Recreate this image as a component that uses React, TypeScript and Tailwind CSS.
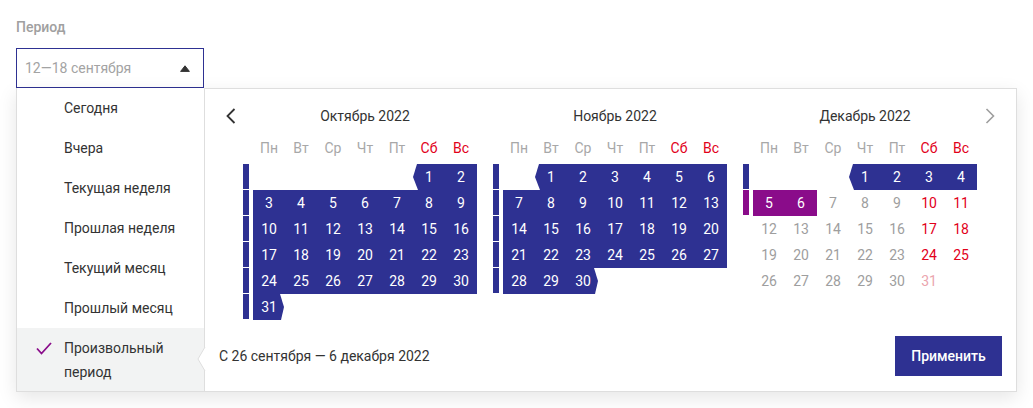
import React from 'react';

const BLUE = 'bg-[#2e3192]';

type Month = {
  title: string;
  offset: number;
  days: number;
  handles: ('blue' | 'purple' | null)[];
  kind: (d: number) => 'range' | 'start' | 'end' | 'purple' | 'plain';
};

const months: Month[] = [
  {
    title: 'Октябрь 2022',
    offset: 5,
    days: 31,
    handles: ['blue', 'blue', 'blue', 'blue', 'blue', 'blue'],
    kind: (d) => (d === 1 ? 'start' : d === 31 ? 'end' : 'range'),
  },
  {
    title: 'Ноябрь 2022',
    offset: 1,
    days: 30,
    handles: ['blue', 'blue', 'blue', 'blue', 'blue'],
    kind: (d) => (d === 1 ? 'start' : d === 30 ? 'end' : 'range'),
  },
  {
    title: 'Декабрь 2022',
    offset: 3,
    days: 31,
    handles: ['blue', 'purple', null, null, null],
    kind: (d) => (d === 1 ? 'start' : d <= 4 ? 'range' : d <= 6 ? 'purple' : 'plain'),
  },
];

const weekdays = ['Пн', 'Вт', 'Ср', 'Чт', 'Пт', 'Сб', 'Вс'];

const menu = ['Сегодня', 'Вчера', 'Текущая неделя', 'Прошлая неделя', 'Текущий месяц', 'Прошлый месяц'];

function DayCell({ d, col, kind, pink }: { d: number; col: number; kind: string; pink: boolean }) {
  const weekend = col >= 5;
  let cls = 'w-8 h-[26px] flex items-center justify-center text-[14px] ';
  if (kind === 'range') cls += BLUE + ' text-white';
  else if (kind === 'start')
    cls += BLUE + ' text-white [clip-path:polygon(4px_0,100%_0,100%_100%,5px_100%,0_50%)]';
  else if (kind === 'end')
    cls += BLUE + ' text-white [clip-path:polygon(0_0,27px_0,31px_50%,28px_100%,0_100%)]';
  else if (kind === 'purple') cls += 'bg-[#8a0c8a] text-white';
  else if (pink) cls += 'text-[#eba5ae]';
  else if (weekend) cls += 'text-[#e2001a]';
  else cls += 'text-[#9e9e9e]';
  return <div className={cls}>{d}</div>;
}

function MonthView({ m }: { m: Month }) {
  const cells: (number | null)[] = [];
  for (let i = 0; i < m.offset; i++) cells.push(null);
  for (let d = 1; d <= m.days; d++) cells.push(d);
  const rows: (number | null)[][] = [];
  for (let i = 0; i < cells.length; i += 7) rows.push(cells.slice(i, i + 7));

  return (
    <div className="flex flex-col">
      <div className="ml-[10px] w-[224px] h-6 flex items-center justify-center text-[14px] text-[#333333]">
        {m.title}
      </div>
      <div className="ml-[10px] mt-2 h-6 grid grid-cols-7 w-[224px]">
        {weekdays.map((w, i) => (
          <div
            key={w}
            className={`flex items-center justify-center text-[14px] ${i >= 5 ? 'text-[#e2001a]' : 'text-[#a8a8a8]'}`}
          >
            {w}
          </div>
        ))}
      </div>
      <div className="mt-1 flex flex-col">
        {rows.map((row, ri) => (
          <div key={ri} className="flex">
            <div className="w-[6px] mr-1 h-[25px] mb-px">
              {m.handles[ri] === 'blue' && <div className={`w-full h-full ${BLUE}`} />}
              {m.handles[ri] === 'purple' && <div className="w-full h-full bg-[#8a0c8a]" />}
            </div>
            {Array.from({ length: 7 }).map((_, ci) => {
              const d = row[ci];
              if (d == null) return <div key={ci} className="w-8 h-[26px]" />;
              return (
                <DayCell
                  key={ci}
                  d={d}
                  col={ci}
                  kind={m.kind(d)}
                  pink={m.title.startsWith('Декабрь') && d === 31}
                />
              );
            })}
          </div>
        ))}
      </div>
    </div>
  );
}

export default function App() {
  return (
    <div className="w-[1033px] h-[408px] bg-white overflow-hidden font-['Roboto',sans-serif] pl-4 pt-[17px]">
      <div className="text-[14px] leading-5 font-medium text-[#a0a0a0]">Период</div>

      {/* select */}
      <div className="mt-[11px] w-[188px] h-10 border border-[#2e3192] flex items-center justify-between pl-2 pr-[13px]">
        <span className="text-[14px] text-[#a3a3a3]">12—18 сентября</span>
        <svg width="10" height="7" viewBox="0 0 10 7">
          <path d="M5 0.8 L9.4 6.4 L0.6 6.4 Z" fill="#333333" stroke="#333333" strokeWidth="1" strokeLinejoin="round" />
        </svg>
      </div>

      {/* dropdown */}
      <div className="w-[1001px] h-[304px] flex border-l border-b border-r border-[#dedede] shadow-[0_6px_18px_rgba(0,0,0,0.10)] bg-white">
        <div className="w-[187px] flex flex-col">
          {menu.map((t) => (
            <div key={t} className="h-10 flex items-center pl-[47px] text-[14px] text-[#333333]">
              {t}
            </div>
          ))}
          <div className="flex-1 bg-[#f2f3f3] relative pt-2 pl-[47px] text-[14px] leading-6 text-[#333333]">
            <svg className="absolute left-[19px] top-[14px]" width="16" height="13" viewBox="0 0 16 13">
              <path d="M1 6.5 L5.5 11.5 L15 1" fill="none" stroke="#8a0c8a" strokeWidth="1.8" />
            </svg>
            <div>Произвольный</div>
            <div>период</div>
          </div>
        </div>

        <div className="flex-1 relative flex flex-col border-l border-t border-[#dedede]">
          <svg className="absolute left-[-8px] top-[258px]" width="9" height="24" viewBox="0 0 9 24">
            <path d="M8 0 L1 12 L8 24 Z" fill="#ffffff" />
            <path d="M8 0 L1 12 L8 24" fill="none" stroke="#dedede" strokeWidth="1" />
          </svg>

          <div className="flex pt-[15px]">
            <div className="w-[38px] pl-[21px]">
              <div className="h-6 flex items-center">
                <svg width="10" height="16" viewBox="0 0 10 16">
                  <path d="M8.5 1 L1.5 8 L8.5 15" fill="none" stroke="#333333" strokeWidth="1.8" />
                </svg>
              </div>
            </div>
            <div className="flex gap-4">
              {months.map((m) => (
                <MonthView key={m.title} m={m} />
              ))}
            </div>
            <div className="pl-[8px]">
              <div className="h-6 flex items-center">
                <svg width="10" height="16" viewBox="0 0 10 16">
                  <path d="M1.5 1 L8.5 8 L1.5 15" fill="none" stroke="#9e9e9e" strokeWidth="1.6" />
                </svg>
              </div>
            </div>
          </div>

          <div className="mt-4 flex items-center justify-between pl-[14px] pr-[14px]">
            <span className="text-[14px] text-[#333333]">С 26 сентября — 6 декабря 2022</span>
            <button className={`w-[107px] h-10 ${BLUE} text-white text-[14px] font-medium`}>Применить</button>
          </div>
        </div>
      </div>
    </div>
  );
}
